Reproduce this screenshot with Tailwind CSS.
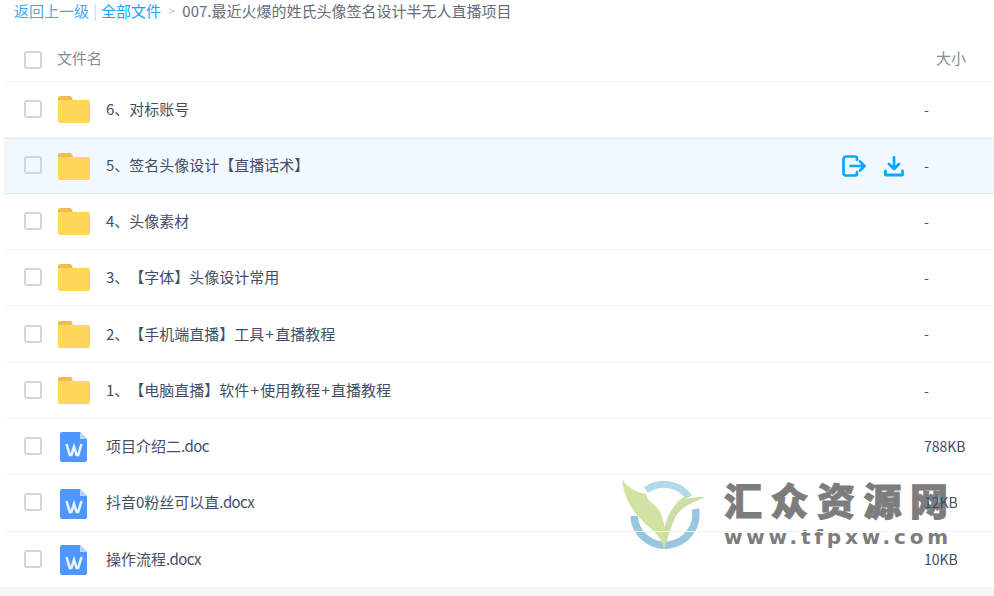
<!DOCTYPE html>
<html lang="zh-CN">
<head>
    <meta charset="UTF-8">
    <title>全部文件</title>
    <script src="https://cdn.jsdelivr.net/npm/@tailwindcss/browser@4"></script>
</head>
<body class="relative bg-white font-['Noto_Sans_CJK_SC','Noto_Sans',sans-serif] text-[15px] text-[#424e67] overflow-hidden [text-spacing-trim:space-all]">
    <svg class="hidden">
        <symbol id="folder" viewBox="0 0 32 27">
            <path d="M0 2a2 2 0 0 1 2-2h10a2 2 0 0 1 2 1.500L15 4H0z" fill="#eebd4e"/>
            <path d="M0 4h30a2 2 0 0 1 2 2v19a2 2 0 0 1-2 2H2a2 2 0 0 1-2-2z" fill="#ffd659"/>
        </symbol>
        <symbol id="word" viewBox="0 0 27 30">
            <path d="M2 0h18l7 7v21a2 2 0 0 1-2 2H2a2 2 0 0 1-2-2V2a2 2 0 0 1 2-2z" fill="#4d97ff"/>
            <path d="M20 0l7 7h-7z" fill="#b9d5ff"/>
            <path d="M6.500 12l3.300 11h1.600L14 15l2.600 8h1.600L21.500 12" fill="none" stroke="#e6f0ff" stroke-width="2.600"/>
        </symbol>
    </svg>

    <!-- watermark, sits under the rows -->
    <div class="absolute left-[620px] top-[478px] flex items-start pointer-events-none">
        <svg class="w-[88px] h-[76px] opacity-90" viewBox="0 0 88 76">
            <path d="M26 12A31 31 0 0 1 69 19" fill="none" stroke="#a9d6e7" stroke-width="7"/>
            <path d="M14 38A31 31 0 1 0 75.500 31" fill="none" stroke="#8cc0dc" stroke-width="7.500"/>
            <path d="M2 1C4 22 14 36 30 50C38 57 42 62 44 71C47 56 45 46 41 36C35 23 28 26 26 16C20 15 8 11 2 1z" fill="#cce09a"/>
            <path d="M44 71C50 56 52 40 61 32C70 24 78 23 85 19C76 19 71 20 66 21L68 16C58 22 50 31 46 44C44 52 43 62 44 71z" fill="#c5dc9a"/>
        </svg>
        <div class="ml-[16px] text-[#7d7d7d] font-bold leading-none whitespace-nowrap">
            <div class="text-[38px] tracking-[8.500px] font-black mt-[2px] [-webkit-text-stroke:1px_#7d7d7d]">汇众资源网</div>
            <div class="mt-[9px] text-[20px] tracking-[3.800px] font-['DejaVu_Sans']">www.tfpxw.com</div>
        </div>
    </div>

    <div class="relative z-10 h-[596px] flex flex-col">
        <!-- breadcrumb -->
        <div class="h-[22px] pl-[14px] flex items-center whitespace-nowrap leading-[22px]">
            <span class="text-[#3fa9f5]">返回上一级</span>
            <span class="mx-[4px] text-[#c5d9ef]">|</span>
            <span class="text-[#06a7ff]">全部文件</span>
            <span class="mx-[7px] text-[#c4c7cc] text-[13px]">&gt;</span>
            <span class="text-[#666d7a]">007.最近火爆的姓氏头像签名设计半无人直播项目</span>
        </div>

        <!-- table header -->
        <div class="h-[60px] ml-[4px] pt-[16px] pl-[20px] pr-[28px] flex items-center border-b border-[#f5f6f8] text-[#878c96]">
            <span class="w-[18px] h-[18px] border-2 border-[#d0d5de] rounded-[3px] mr-[15px]"></span>
            <span class="flex-1 -mt-[3px]">文件名</span>
            <span class="-mt-[3px]">大小</span>
        </div>

        <!-- rows -->
        <div class="flex-none">
            <div class="h-[56px] ml-[4px] flex items-center border-b border-[#f5f6f8]">
                <span class="ml-[20px] mb-[2px] w-[18px] h-[18px] border-2 border-[#d0d5de] rounded-[3px]"></span>
                <svg class="ml-[16px] w-[32px] h-[27px]"><use href="#folder"/></svg>
                <span class="ml-[16px] mb-[1px] flex-1">6、对标账号</span>
                <span class="w-[70px] mb-[1px] text-[14px]">-</span>
            </div>
            <div class="h-[56px] ml-[4px] flex items-center bg-[#f2f9fe] border-y border-[#dbe9f5]">
                <span class="ml-[20px] mb-[2px] w-[18px] h-[18px] border-2 border-[#d0d5de] rounded-[3px]"></span>
                <svg class="ml-[16px] w-[32px] h-[27px]"><use href="#folder"/></svg>
                <span class="ml-[16px] mb-[1px] flex-1">5、签名头像设计【直播话术】</span>
                <svg class="w-[24px] h-[22px] mr-[18px]" viewBox="0 0 24 22" fill="none" stroke="#06a7ff" stroke-width="2.600" stroke-linecap="round" stroke-linejoin="round">
                    <path d="M15 5V3.500A2 2 0 0 0 13 1.500H4A2.500 2.500 0 0 0 1.500 4v14A2.500 2.500 0 0 0 4 20.500h9a2 2 0 0 0 2-2V17"/>
                    <path d="M8.500 11H22M18 6.500l4.500 4.500-4.500 4.500"/>
                </svg>
                <svg class="w-[20px] h-[21px] mr-[20px]" viewBox="0 0 20 21" fill="none" stroke="#06a7ff" stroke-width="2.800" stroke-linecap="round" stroke-linejoin="round">
                    <path d="M10 1.500V12M5 8l5 5 5-5"/>
                    <path d="M1.500 15v4h17v-4"/>
                </svg>
                <span class="w-[70px] mb-[1px] text-[14px]">-</span>
            </div>
            <div class="h-[56px] ml-[4px] flex items-center border-b border-[#f5f6f8]">
                <span class="ml-[20px] mb-[2px] w-[18px] h-[18px] border-2 border-[#d0d5de] rounded-[3px]"></span>
                <svg class="ml-[16px] w-[32px] h-[27px]"><use href="#folder"/></svg>
                <span class="ml-[16px] mb-[1px] flex-1">4、头像素材</span>
                <span class="w-[70px] mb-[1px] text-[14px]">-</span>
            </div>
            <div class="h-[56px] ml-[4px] flex items-center border-b border-[#f5f6f8]">
                <span class="ml-[20px] mb-[2px] w-[18px] h-[18px] border-2 border-[#d0d5de] rounded-[3px]"></span>
                <svg class="ml-[16px] w-[32px] h-[27px]"><use href="#folder"/></svg>
                <span class="ml-[16px] mb-[1px] flex-1">3、【字体】头像设计常用</span>
                <span class="w-[70px] mb-[1px] text-[14px]">-</span>
            </div>
            <div class="h-[57px] ml-[4px] flex items-center border-b border-[#f5f6f8]">
                <span class="ml-[20px] mb-[1px] w-[18px] h-[18px] border-2 border-[#d0d5de] rounded-[3px]"></span>
                <svg class="ml-[16px] w-[32px] h-[27px]"><use href="#folder"/></svg>
                <span class="ml-[16px] flex-1">2、【手机端直播】工具<span class="mx-[1.250px]">+</span>直播教程</span>
                <span class="w-[70px] mb-[1px] text-[14px]">-</span>
            </div>
            <div class="h-[56px] ml-[4px] flex items-center border-b border-[#f5f6f8]">
                <span class="ml-[20px] mb-[2px] w-[18px] h-[18px] border-2 border-[#d0d5de] rounded-[3px]"></span>
                <svg class="ml-[16px] w-[32px] h-[27px]"><use href="#folder"/></svg>
                <span class="ml-[16px] mb-[1px] flex-1">1、【电脑直播】软件<span class="mx-[1.250px]">+</span>使用教程<span class="mx-[1.250px]">+</span>直播教程</span>
                <span class="w-[70px] mb-[1px] text-[14px]">-</span>
            </div>
            <div class="h-[56px] ml-[4px] flex items-center border-b border-[#f5f6f8]">
                <span class="ml-[20px] mb-[2px] w-[18px] h-[18px] border-2 border-[#d0d5de] rounded-[3px]"></span>
                <svg class="ml-[18px] mr-[2px] mt-[1px] w-[27px] h-[30px]"><use href="#word"/></svg>
                <span class="ml-[17px] mb-[1px] flex-1">项目介绍二<span class="tracking-[-0.600px]">.doc</span></span>
                <span class="w-[70px] mb-[1px] text-[14px]">788KB</span>
            </div>
            <div class="h-[57px] ml-[4px] flex items-center border-b border-[#f5f6f8]">
                <span class="ml-[20px] mb-[2px] w-[18px] h-[18px] border-2 border-[#d0d5de] rounded-[3px]"></span>
                <svg class="ml-[18px] mr-[2px] mt-[1px] w-[27px] h-[30px]"><use href="#word"/></svg>
                <span class="ml-[17px] mb-[1px] flex-1">抖音0粉丝可以直<span class="tracking-[-0.600px]">.docx</span></span>
                <span class="w-[70px] mb-[1px] text-[14px]">12KB</span>
            </div>
            <div class="h-[55px] ml-[4px] flex items-center">
                <span class="ml-[20px] mb-[2px] w-[18px] h-[18px] border-2 border-[#d0d5de] rounded-[3px]"></span>
                <svg class="ml-[18px] mr-[2px] mt-[1px] w-[27px] h-[30px]"><use href="#word"/></svg>
                <span class="ml-[17px] mb-[1px] flex-1">操作流程<span class="tracking-[-0.600px]">.docx</span></span>
                <span class="w-[70px] mb-[1px] text-[14px]">10KB</span>
            </div>
        </div>
        <div class="flex-1 bg-[#f6f6f6]"></div>
    </div>
</body>
</html>
